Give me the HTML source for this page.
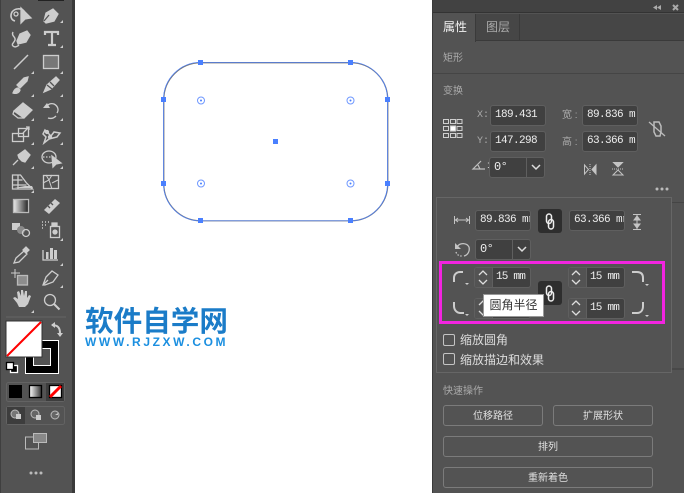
<!DOCTYPE html>
<html><head><meta charset="utf-8">
<style>
*{box-sizing:border-box}
html,body{margin:0;padding:0;width:684px;height:493px;overflow:hidden;background:#fff}
body{position:relative;font-family:"Liberation Sans","WenQuanYi Zen Hei","Noto Sans CJK SC",sans-serif}
.a{position:absolute}
.t{position:absolute;font-size:11px;line-height:14px;white-space:nowrap;color:#dcdcdc}
.g{color:#aaa}
.in{position:absolute;background:#404040;border:1px solid #5f5f5f;border-radius:3px;height:21px;color:#eee;font:11px/18px "Liberation Mono",monospace;letter-spacing:-.6px;padding-left:4px;white-space:nowrap;overflow:hidden}
.c{padding-left:21px;letter-spacing:-.8px}
.btn{position:absolute;border:1px solid #7b7b7b;border-radius:3px;height:21px;text-align:center;color:#e0e0e0;font-size:10px;line-height:21px;background:#535353}
.cb{position:absolute;left:443px;width:12px;height:12px;border:1px solid #c4c4c4;border-radius:2px}
</style></head><body>
<!-- toolbar -->
<div class="a" style="left:0;top:0;width:72px;height:493px;background:#535353"></div>
<div class="a" style="left:72px;top:0;width:3px;height:493px;background:#3a3a3a"></div>
<div class="a" style="left:0;top:0;width:1px;height:493px;background:#3f3f3f"></div>
<div class="a" style="left:38px;top:0;width:26px;height:1px;background:#222"></div>
<svg class="a" style="left:0;top:0" width="75" height="493" viewBox="0 0 75 493" fill="none" stroke="#cdcdcd" stroke-width="1.3">
<!-- row 1 -->
<path d="M15 21c-4-1-5-5-3-9 3-4 9-4 12-1" stroke-width="1.6"/><circle cx="16" cy="14" r="2"/><path d="M21 8l10 10-6 1-4 4z" fill="#cdcdcd"/>
<path d="M44 21l2-8 7-4 5 5-4 7-8 2z" fill="#cdcdcd"/><path d="M44 21l5-6" stroke="#535353"/>
<!-- row 2 -->
<path d="M13 32c-2 4 3 5 2 8s-4 4-2 6 5 0 6-1" stroke-width="1.4"/><path d="M17 41l3-7 7-3 3 4-4 7-8 2z" fill="#cdcdcd"/>
<path d="M45 35v-3h13v3M52 32v13M48 45h8" stroke-width="2.2"/>
<!-- row 3 -->
<path d="M14 69l14-14" stroke-width="1.5"/>
<rect x="43.500" y="55.500" width="15" height="13" fill="#777"/>
<!-- row 4 -->
<path d="M17 85l7-7 4-1-1 4-7 7z" fill="#cdcdcd"/><path d="M13 93c1-3 3-5 5-5l2 2c-1 3-4 4-7 3z" fill="#cdcdcd"/>
<path d="M44 92l3-7 9-8 3 3-8 9z" fill="#cdcdcd"/><path d="M47 85l5 4M50 82l4 4" stroke="#535353"/>
<!-- row 5 -->
<path d="M14 111l9-8 9 7-8 8z" fill="#cdcdcd"/><path d="M14 111l-1 3 5 4h6"/>
<path d="M46 108c1-4 5-5 8-4 4 2 5 6 3 9M48 118c3 1 6 0 8-2" stroke-width="1.3"/><path d="M43 108h7l-3-5z" fill="#cdcdcd" stroke="none"/>
<!-- row 6 -->
<rect x="12.500" y="133.500" width="11" height="8"/><rect x="18.500" y="128.500" width="10" height="8"/><path d="M23 133l6-6m-3 0h3v3"/>
<path d="M45 130l6 6 3-4 6 1-3 4-8 2-5 4 2-6-3-3z" stroke-width="1.5"/><circle cx="47" cy="132" r="1.500" fill="#cdcdcd"/><circle cx="50" cy="137" r="1.500" fill="#cdcdcd"/>
<!-- row 7 -->
<path d="M18 155l7-5 5 5-5 7-3-1-3-3z" fill="#cdcdcd"/><path d="M18 160l-5 5"/>
<ellipse cx="49" cy="157" rx="7" ry="6"/><path d="M43 157h10" stroke-dasharray="1.500 1.500"/><path d="M52 156l9 7-5 1-3 3z" fill="#cdcdcd"/>
<!-- row 8 -->
<path d="M12.500 189v-14l8 0 6 8 6 6z"/><path d="M12.500 180h10M12.500 185h14M18 175v14"/>
<path d="M25 186h7l1 2H14z" fill="#cdcdcd" stroke="none"/>
<rect x="43.500" y="175.500" width="15" height="13"/><path d="M43 183l6-3 3-5M49 180l3 9M52 183l6-3M46 175l3 5" stroke-width="1"/>
<!-- row 9 -->
<defs><linearGradient id="gr"><stop offset="0" stop-color="#eee"/><stop offset="1" stop-color="#222"/></linearGradient><linearGradient id="gr2"><stop offset="0" stop-color="#fff"/><stop offset="1" stop-color="#333"/></linearGradient></defs>
<rect x="13.500" y="199.500" width="15" height="13" fill="url(#gr)" stroke="#bbb"/>
<path d="M44 210l11-11 5 4-11 11z" fill="#cdcdcd" stroke="none"/><path d="M48 206l2 2M51 203l2 2" stroke="#535353"/>
<!-- row 10 -->
<rect x="12" y="223" width="8" height="7" fill="#cdcdcd" stroke="none"/><circle cx="21" cy="230" r="4" fill="#8a8a8a" stroke="none"/><circle cx="26" cy="233" r="3.500"/>
<path d="M42 222h1M45 222h1M48 222h1M42 225h1M45 225h1M42 228h1" stroke-width="1.500"/><rect x="50.500" y="226.500" width="9" height="11"/><circle cx="55" cy="232" r="2" fill="#cdcdcd"/><path d="M52 226v-3h5v3" fill="#cdcdcd"/>
<!-- row 11 -->
<path d="M14 263l2-5 8-7 3 3-8 8z"/><path d="M23 250l3-3 3 3-3 3z" fill="#cdcdcd"/>
<path d="M43 250v10h15"/><rect x="46" y="252" width="2.500" height="7" fill="#cdcdcd" stroke="none"/><rect x="50" y="248" width="3" height="11" fill="#cdcdcd" stroke="none"/><rect x="54" y="250" width="3" height="9" fill="#cdcdcd" stroke="none"/>
<!-- row 12 -->
<rect x="17.500" y="275.500" width="10" height="9.500" fill="#8d8d8d" stroke="#bbb"/><path d="M11 273h9M15 269v9" stroke-width="1"/>
<path d="M43 285l3-8 6-6 6 4-5 7-8 3z"/><path d="M43 285l5-5"/>
<!-- row 13 -->
<path d="M17 303l-4-5 2-1 3 2-1-7 2-1 2 5v-6h2l1 6 1-5h2l0 7 2-3 2 1-3 8-3 3h-6z" fill="#cdcdcd" stroke="none"/>
<circle cx="50" cy="300" r="5.500"/><path d="M54 304l5.500 5.500" stroke-width="2"/>
<!-- corner triangles -->
<g fill="#cdcdcd" stroke="none"><path d="M63 20v3h-3zM63 45v3h-3zM34 71v3h-3zM63 71v3h-3zM34 94v3h-3zM63 94v3h-3zM34 118v3h-3zM63 118v3h-3zM34 142v3h-3zM63 142v3h-3zM34 166v3h-3zM63 166v3h-3zM34 190v3h-3zM63 238v3h-3zM63 263v3h-3zM63 285v3h-3zM34 310v3h-3z"/></g>
<path d="M6 317h60" stroke="#666" stroke-width="1"/>
<!-- stroke square -->
<rect x="25" y="340" width="34" height="34" fill="#000" stroke="none"/><rect x="25.500" y="340.500" width="33" height="33" stroke="#fff" stroke-width="1"/>
<rect x="33.500" y="348.500" width="17" height="17" fill="#535353" stroke="#fff" stroke-width="1"/>
<!-- fill square -->
<rect x="6" y="321" width="36" height="36" fill="#fff" stroke="#333" stroke-width="1"/>
<path d="M7 356L41 322" stroke="#f00" stroke-width="2"/>
<!-- swap -->
<path d="M52 325c5 0 8 2 8 8" stroke-width="2"/><path d="M51 325l4-3v6zM60 337l-3-4h6z" fill="#cdcdcd" stroke="none"/>
<!-- default -->
<rect x="10.500" y="365.500" width="7" height="7" fill="#000" stroke="#fff"/><rect x="6.500" y="362.500" width="7" height="7" fill="#fff" stroke="#000"/>
<!-- swatch row -->
<rect x="6.500" y="382.500" width="58" height="19" rx="2" stroke="#636363" stroke-width="1"/>
<rect x="46" y="383" width="18" height="18" fill="#3d3d3d" stroke="none"/>
<rect x="9" y="385" width="13" height="13" fill="#000" stroke="none"/>
<rect x="29.500" y="385.500" width="12" height="12" fill="url(#gr2)" stroke="#000"/>
<rect x="49.500" y="385.500" width="12" height="12" fill="#fff" stroke="#000"/><path d="M50 397l11-11" stroke="#f00" stroke-width="3"/>
<!-- draw modes -->
<rect x="6.500" y="406.500" width="58" height="18" rx="2" stroke="#636363" stroke-width="1"/>
<rect x="7" y="407" width="18" height="17" fill="#3d3d3d" stroke="none"/>
<circle cx="15" cy="414" r="4" fill="#777" stroke="#bbb" stroke-width="1"/><rect x="16" y="414" width="5" height="5" fill="#ccc" stroke="none"/>
<circle cx="35" cy="414" r="4" fill="#666" stroke="#bbb" stroke-width="1"/><rect x="36" y="415" width="5" height="5" fill="#ccc" stroke="none"/>
<circle cx="55" cy="415" r="4" fill="#666" stroke="#bbb" stroke-width="1"/><path d="M55 415h3v-2z" fill="#ccc" stroke="none"/>
<!-- screen mode -->
<rect x="33.500" y="433.500" width="13" height="9" fill="#888" stroke="#bbb" stroke-width="1"/><path d="M33 437h-7.500v12h13v-6" stroke="#bbb" stroke-width="1"/>
<circle cx="31" cy="473" r="1.500" fill="#bbb" stroke="none"/><circle cx="36" cy="473" r="1.500" fill="#bbb" stroke="none"/><circle cx="41" cy="473" r="1.500" fill="#bbb" stroke="none"/>
</svg>
<!-- canvas rect -->
<svg class="a" style="left:150px;top:50px" width="250" height="180" viewBox="0 0 250 180" fill="none">
<rect x="13.800" y="12.800" width="224" height="158" rx="37" stroke="#777" stroke-width="1.200"/>
<rect x="13.500" y="12.300" width="224" height="158.500" rx="37" stroke="#4a80ff" stroke-width=".7"/>
<g fill="#4a80ff"><rect x="48" y="10" width="5" height="5"/><rect x="198" y="10" width="5" height="5"/><rect x="48" y="168" width="5" height="5"/><rect x="198" y="168" width="5" height="5"/><rect x="11" y="47" width="5" height="5"/><rect x="235" y="47" width="5" height="5"/><rect x="11" y="131" width="5" height="5"/><rect x="235" y="131" width="5" height="5"/><rect x="123" y="89" width="5" height="5"/></g>
<g stroke="#6f98ff" stroke-width="1"><circle cx="51" cy="50.500" r="3.500"/><circle cx="200.500" cy="50.500" r="3.500"/><circle cx="51" cy="133.500" r="3.500"/><circle cx="200.500" cy="133.500" r="3.500"/></g>
<g fill="#4a80ff"><circle cx="51" cy="50.500" r="1"/><circle cx="200.500" cy="50.500" r="1"/><circle cx="51" cy="133.500" r="1"/><circle cx="200.500" cy="133.500" r="1"/></g>
</svg>
<!-- logo -->
<div class="a" style="left:85px;top:303px;font:bold 28.600px/34px 'Noto Sans CJK SC',sans-serif;color:#1b7cc8;white-space:nowrap">软件自学网</div>
<div class="a" style="left:85px;top:335px;font:bold 12px/14px 'Liberation Sans',sans-serif;letter-spacing:2.600px;color:#1b8fe0;white-space:nowrap">WWW.RJZXW.COM</div>
<!-- panel -->
<div class="a" style="left:432px;top:0;width:252px;height:493px;background:#535353;border-left:1px solid #3a3a3a"></div>
<div class="a" style="left:433px;top:0;width:251px;height:13px;background:#424242;border-bottom:1px solid #333"></div>
<div class="a" style="left:433px;top:14px;width:251px;height:27px;background:#464646;border-bottom:1px solid #3a3a3a"></div>
<div class="a" style="left:433px;top:14px;width:43px;height:28px;background:#535353;border-right:1px solid #3a3a3a"></div>
<div class="a" style="left:476px;top:14px;width:44px;height:27px;border-right:1px solid #3a3a3a"></div>
<svg class="a" style="left:650px;top:2px" width="34" height="11" fill="#aaa"><path d="M7 3v5L3 5.500zM11 3v5L7 5.500z"/><path d="M23 3l5 5M28 3l-5 5" stroke="#aaa" stroke-width="2"/></svg>
<div class="t" style="left:443px;top:20px;font-size:12px;color:#f2f2f2">属性</div>
<div class="t g" style="left:486px;top:20px;font-size:12px">图层</div>
<div class="t g" style="left:443px;top:52px;font-size:10px">矩形</div>
<div class="a" style="left:433px;top:73px;width:251px;height:1px;background:#454545"></div>
<div class="t g" style="left:443px;top:85px;font-size:10px">变换</div>
<svg class="a" style="left:443px;top:119px" width="20" height="20" fill="none" stroke="#cfcfcf" stroke-width="1"><rect x=".5" y=".5" width="5" height="4"/><rect x="7.500" y=".5" width="5" height="4"/><rect x="14" y=".5" width="5" height="4"/><rect x=".5" y="7.500" width="5" height="4"/><rect x="7.500" y="7" width="5" height="5" fill="#fff"/><rect x="14" y="7.500" width="5" height="4"/><rect x=".5" y="14.500" width="5" height="4"/><rect x="7.500" y="14.500" width="5" height="4"/><rect x="14" y="14.500" width="5" height="4"/></svg>
<div class="t g" style="left:477px;top:109px;font:10px/14px 'Liberation Mono',monospace">X:</div>
<div class="t g" style="left:477px;top:135px;font:10px/14px 'Liberation Mono',monospace">Y:</div>
<div class="in" style="left:490px;top:105px;width:56px">189.431</div>
<div class="in" style="left:490px;top:131px;width:56px">147.298</div>
<div class="t g" style="left:562px;top:109px;font-size:10px">宽 :</div>
<div class="t g" style="left:562px;top:136px;font-size:10px">高 :</div>
<div class="in" style="left:582px;top:105px;width:56px">89.836 m</div>
<div class="in" style="left:582px;top:131px;width:56px">63.366 m</div>
<svg class="a" style="left:648px;top:120px" width="20" height="18" fill="none" stroke="#bcbcbc" stroke-width="1.500"><path d="M6 2h5l2 4v6l-1 4H8L6 12V6z"/><path d="M1 2l16 14" stroke-width="1.300"/></svg>
<svg class="a" style="left:471px;top:159px" width="16" height="12" fill="none" stroke="#c0c0c0" stroke-width="1.200"><path d="M14 10H2L10 2M7 6l2 4"/></svg>
<div class="t" style="left:487px;top:159px;font-size:10px">:</div>
<div class="in" style="left:489px;top:157px;width:56px;font-size:12px">0°<span class="a" style="left:36px;top:0;width:1px;height:19px;background:#5f5f5f"></span><svg class="a" style="left:41px;top:6px" width="10" height="7" fill="none" stroke="#ddd" stroke-width="1.500"><path d="M1 1l4 4 4-4"/></svg></div>
<svg class="a" style="left:582px;top:162px" width="60" height="15" fill="none" stroke="#c4c4c4"><path d="M2.500 3v9l4-4.500z"/><path d="M14 3v9l-4-4.500z" fill="#c4c4c4"/><path d="M8 2v11" stroke-dasharray="1 1"/><path d="M31 0h10l-5 5z" fill="#c4c4c4"/><path d="M31 13h10l-5-5z"/><path d="M30 7h12" stroke-dasharray="1 1"/></svg>
<svg class="a" style="left:655px;top:187px" width="14" height="4" fill="#bbb"><circle cx="2" cy="2" r="1.500"/><circle cx="7" cy="2" r="1.500"/><circle cx="12" cy="2" r="1.500"/></svg>
<!-- subpanel -->
<div class="a" style="left:672px;top:202px;width:12px;height:1px;background:#454545"></div>
<div class="a" style="left:672px;top:368px;width:12px;height:2px;background:#484848"></div>
<div class="a" style="left:436px;top:197px;width:236px;height:176px;background:#535353;border:1px solid #666"></div>
<svg class="a" style="left:454px;top:215px" width="16" height="10" fill="none" stroke="#c4c4c4"><path d="M.5 1v8M15.500 1v8M1 5h14M4 3L1.500 5 4 7M12 3l2.500 2L12 7"/></svg>
<div class="in" style="left:475px;top:210px;width:56px">89.836 mr</div>
<div class="a" style="left:538px;top:209px;width:24px;height:24px;background:#2e2e2e;border-radius:3px"></div>
<svg class="a" style="left:544px;top:212px" width="12" height="19" fill="none" stroke="#eee" stroke-width="1.500"><rect x="2.500" y="2" width="5" height="9.500" rx="2.500"/><rect x="4.500" y="7.500" width="5" height="9.500" rx="2.500"/></svg>
<div class="in" style="left:569px;top:210px;width:56px">63.366 mr</div>
<svg class="a" style="left:631px;top:213px" width="12" height="18" fill="#c4c4c4" stroke="#c4c4c4"><path d="M2 1.500h8M2 16.500h8M6 2v14" fill="none"/><path d="M3 7l3-4 3 4zM3 11l3 4 3-4z"/></svg>
<svg class="a" style="left:453px;top:240px" width="20" height="20" fill="none" stroke="#c4c4c4" stroke-width="1.300"><path d="M4 7c3-5 10-4 12 0 1 4-1 8-5 9"/><path d="M2 3v6h6z" fill="#c4c4c4" stroke="none"/><path d="M3 12c1 3 3 4 6 4" stroke-dasharray="1.500 1.500"/></svg>
<div class="in" style="left:475px;top:239px;width:56px;font-size:12px">0°<span class="a" style="left:36px;top:0;width:1px;height:19px;background:#5f5f5f"></span><svg class="a" style="left:41px;top:6px" width="10" height="7" fill="none" stroke="#ddd" stroke-width="1.500"><path d="M1 1l4 4 4-4"/></svg></div>
<!-- magenta -->
<div class="a" style="left:439px;top:261px;width:226px;height:63px;border:3px solid #f224e0"></div>
<svg class="a" style="left:450px;top:268px" width="210" height="52" fill="none" stroke="#cdcdcd" stroke-width="2"><path d="M4 14v-4c0-4 3-6 6-6h3"/><path d="M4 34v4c0 4 3 7 6 7h4"/><path d="M193 14v-4c0-4-2-6-6-6h-5"/><path d="M193 34v4c0 4-2 7-6 7h-5"/><g fill="#cdcdcd" stroke="none"><path d="M15 15h4l-2 2zM15 46h4l-2 2zM195 16h4l-2 2zM195 47h4l-2 2z"/></g></svg>
<div class="in c" style="left:474px;top:267px;width:57px">15 mm<span class="a" style="left:0;top:0;width:18px;height:19px;border-right:1px solid #5f5f5f;background:#535353"></span></div>
<div class="in c" style="left:568px;top:267px;width:57px">15 mm<span class="a" style="left:0;top:0;width:18px;height:19px;border-right:1px solid #5f5f5f;background:#535353"></span></div>
<div class="in" style="left:474px;top:298px;width:57px"><span class="a" style="left:0;top:0;width:18px;height:19px;border-right:1px solid #5f5f5f;background:#535353"></span></div>
<div class="in c" style="left:568px;top:298px;width:57px">15 mm<span class="a" style="left:0;top:0;width:18px;height:19px;border-right:1px solid #5f5f5f;background:#535353"></span></div>
<svg class="a" style="left:476px;top:269px" width="150" height="50" fill="none" stroke="#ddd" stroke-width="1.300"><path d="M3 6l4-4 4 4M3 11l4 4 4-4M96 6l4-4 4 4M96 11l4 4 4-4M96 36l4-4 4 4M96 42l4 4 4-4M3 36l4-4 4 4M3 42l4 4 4-4"/></svg>
<div class="a" style="left:538px;top:281px;width:24px;height:24px;background:#2e2e2e;border-radius:3px"></div>
<svg class="a" style="left:544px;top:284px" width="12" height="19" fill="none" stroke="#eee" stroke-width="1.500"><rect x="2.500" y="2" width="5" height="9.500" rx="2.500"/><rect x="4.500" y="7.500" width="5" height="9.500" rx="2.500"/></svg>
<div class="a" style="left:483px;top:294px;width:61px;height:23px;background:#fff;border:1px solid #999;color:#333;font-size:12px;line-height:21px;text-align:center;white-space:nowrap">圆角半径</div>
<!-- checks -->
<div class="cb" style="top:334px"></div>
<div class="t" style="left:460px;top:333px;font-size:12px">缩放圆角</div>
<div class="cb" style="top:353px"></div>
<div class="t" style="left:460px;top:353px;font-size:12px">缩放描边和效果</div>
<div class="t g" style="left:443px;top:385px;font-size:10px">快速操作</div>
<div class="btn" style="left:443px;top:405px;width:100px">位移路径</div>
<div class="btn" style="left:553px;top:405px;width:100px">扩展形状</div>
<div class="btn" style="left:443px;top:436px;width:210px">排列</div>
<div class="btn" style="left:443px;top:467px;width:210px">重新着色</div>
</body></html>
